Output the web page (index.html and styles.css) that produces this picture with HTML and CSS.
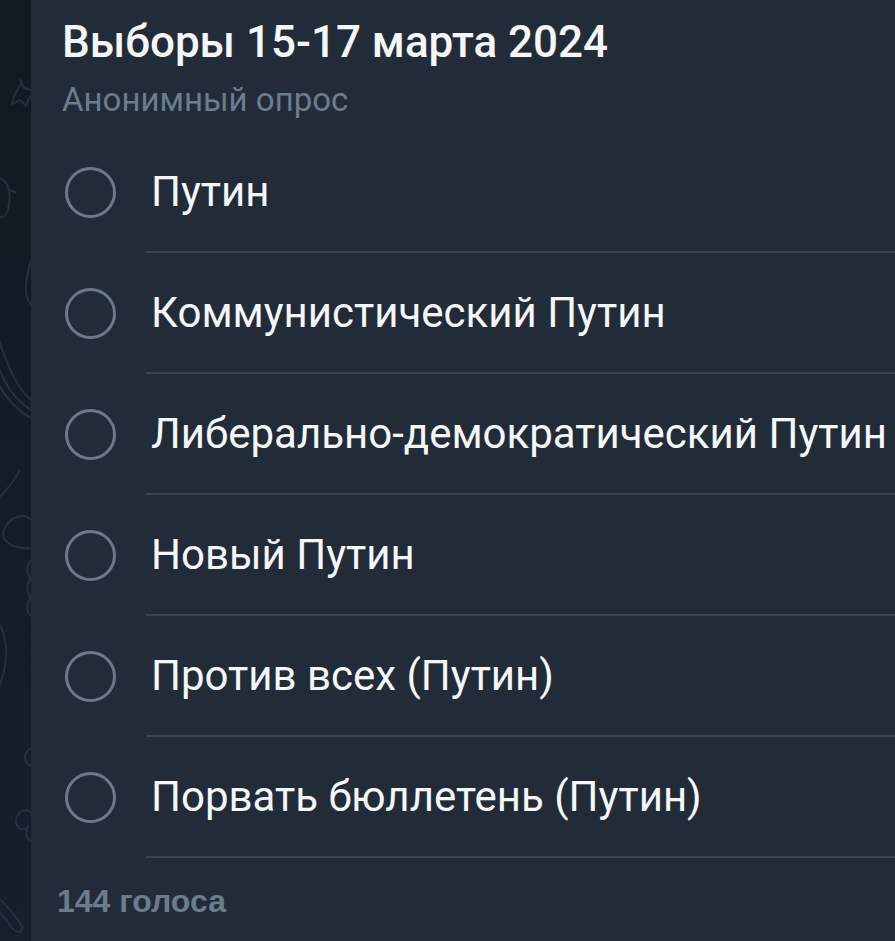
FILE: index.html
```html
<!DOCTYPE html>
<html lang="ru">
<head>
<meta charset="utf-8">
<title>Опрос</title>
<link rel="stylesheet" href="styles.css">
</head>
<body>
<div class="screen">
  <div class="wallpaper">
    <svg class="doodles" width="31" height="941" viewBox="0 0 31 941" fill="none" stroke="#243140" stroke-width="2" stroke-linecap="round" stroke-linejoin="round">
      <path d="M20 80 L24 88 L31 90"/>
      <path d="M22 82 L14 96 L12 104 L20 100 L26 106 L30 96"/>
      <path d="M-2 178 C8 180 12 190 8 210 C4 220 -2 218 -4 214"/>
      <path d="M10 190 L16 192"/>
      <path d="M31 260 C26 280 24 290 28 300 L31 305"/>
      <path d="M-4 330 C4 360 18 390 31 400"/>
      <path d="M-4 360 C2 380 14 400 31 410"/>
      <path d="M-4 380 C4 395 16 410 31 418"/>
      <path d="M20 470 C14 480 8 490 -2 498"/>
      <path d="M31 520 C24 512 10 516 4 530 C0 540 12 550 31 548"/>
      <path d="M-2 620 C8 640 10 660 -2 690"/>
      <path d="M31 560 C26 566 26 574 31 578 C26 584 26 592 31 598 C26 604 26 612 31 616"/>
      <path d="M31 748 C24 752 22 762 31 766"/>
      <path d="M31 812 C24 808 16 812 16 822 C18 832 26 830 28 826 C24 836 28 842 31 840"/>
      <path d="M-4 896 C6 904 14 914 22 926 C24 932 18 934 12 928 C6 920 0 912 -4 908"/>
    </svg>
  </div>
  <main class="bubble">
    <header class="poll-head">
      <h1 class="poll-title">Выборы 15-17 марта 2024</h1>
      <p class="poll-type">Анонимный опрос</p>
    </header>
    <ul class="options">
      <li class="option"><span class="radio"></span><span class="label">Путин</span></li>
      <li class="option"><span class="radio"></span><span class="label">Коммунистический Путин</span></li>
      <li class="option"><span class="radio"></span><span class="label">Либерально-демократический Путин</span></li>
      <li class="option"><span class="radio"></span><span class="label">Новый Путин</span></li>
      <li class="option"><span class="radio"></span><span class="label">Против всех (Путин)</span></li>
      <li class="option"><span class="radio"></span><span class="label">Порвать бюллетень (Путин)</span></li>
    </ul>
    <footer class="poll-foot">144 голоса</footer>
  </main>
</div>
</body>
</html>
```
FILE: styles.css
```css
* { box-sizing: border-box; }
html, body {
  margin: 0;
  padding: 0;
  background: #121b25;
  height: 100%;
  overflow: hidden;
}
.screen {
  display: flex;
  width: 895px;
  height: 941px;
  font-family: Roboto, "Noto Sans", sans-serif;
}
.wallpaper {
  width: 31px;
  flex: none;
  background: linear-gradient(180deg, #111922 0%, #131c27 50%, #15202c 100%);
  overflow: hidden;
}
.doodles { display: block; }
.bubble {
  flex: 1;
  background: #222c39;
  padding-left: 31px;
  overflow: hidden;
}
.poll-head {
  padding-top: 16px;
}
.poll-title {
  margin: 0;
  font-size: 44px;
  line-height: 52px;
  font-weight: 500;
  color: #f4f6f8;
  white-space: nowrap;
}
.poll-type {
  margin: 12px 0 0;
  font-size: 33px;
  line-height: 40px;
  color: #6b7c8d;
}
.options {
  list-style: none;
  margin: 12px 0 0;
  padding: 0;
}
.option {
  display: flex;
  height: 121px;
}
.radio {
  flex: none;
  width: 84px;
  display: flex;
  align-items: center;
  padding-left: 3px;
}
.radio::before {
  content: "";
  width: 51px;
  height: 51px;
  border: 3px solid #6a7a8b;
  border-radius: 50%;
  box-sizing: border-box;
}
.label {
  flex: 1;
  display: flex;
  align-items: center;
  padding-left: 5px;
  border-bottom: 2px solid #3a4552;
  font-size: 42px;
  color: #f4f6f8;
  white-space: nowrap;
}
.poll-foot {
  margin-left: -5px;
  padding-top: 25px;
  font-family: "Liberation Sans", Arial, sans-serif;
  font-weight: 700;
  font-size: 32px;
  line-height: 36px;
  color: #6b7c8d;
}
```
